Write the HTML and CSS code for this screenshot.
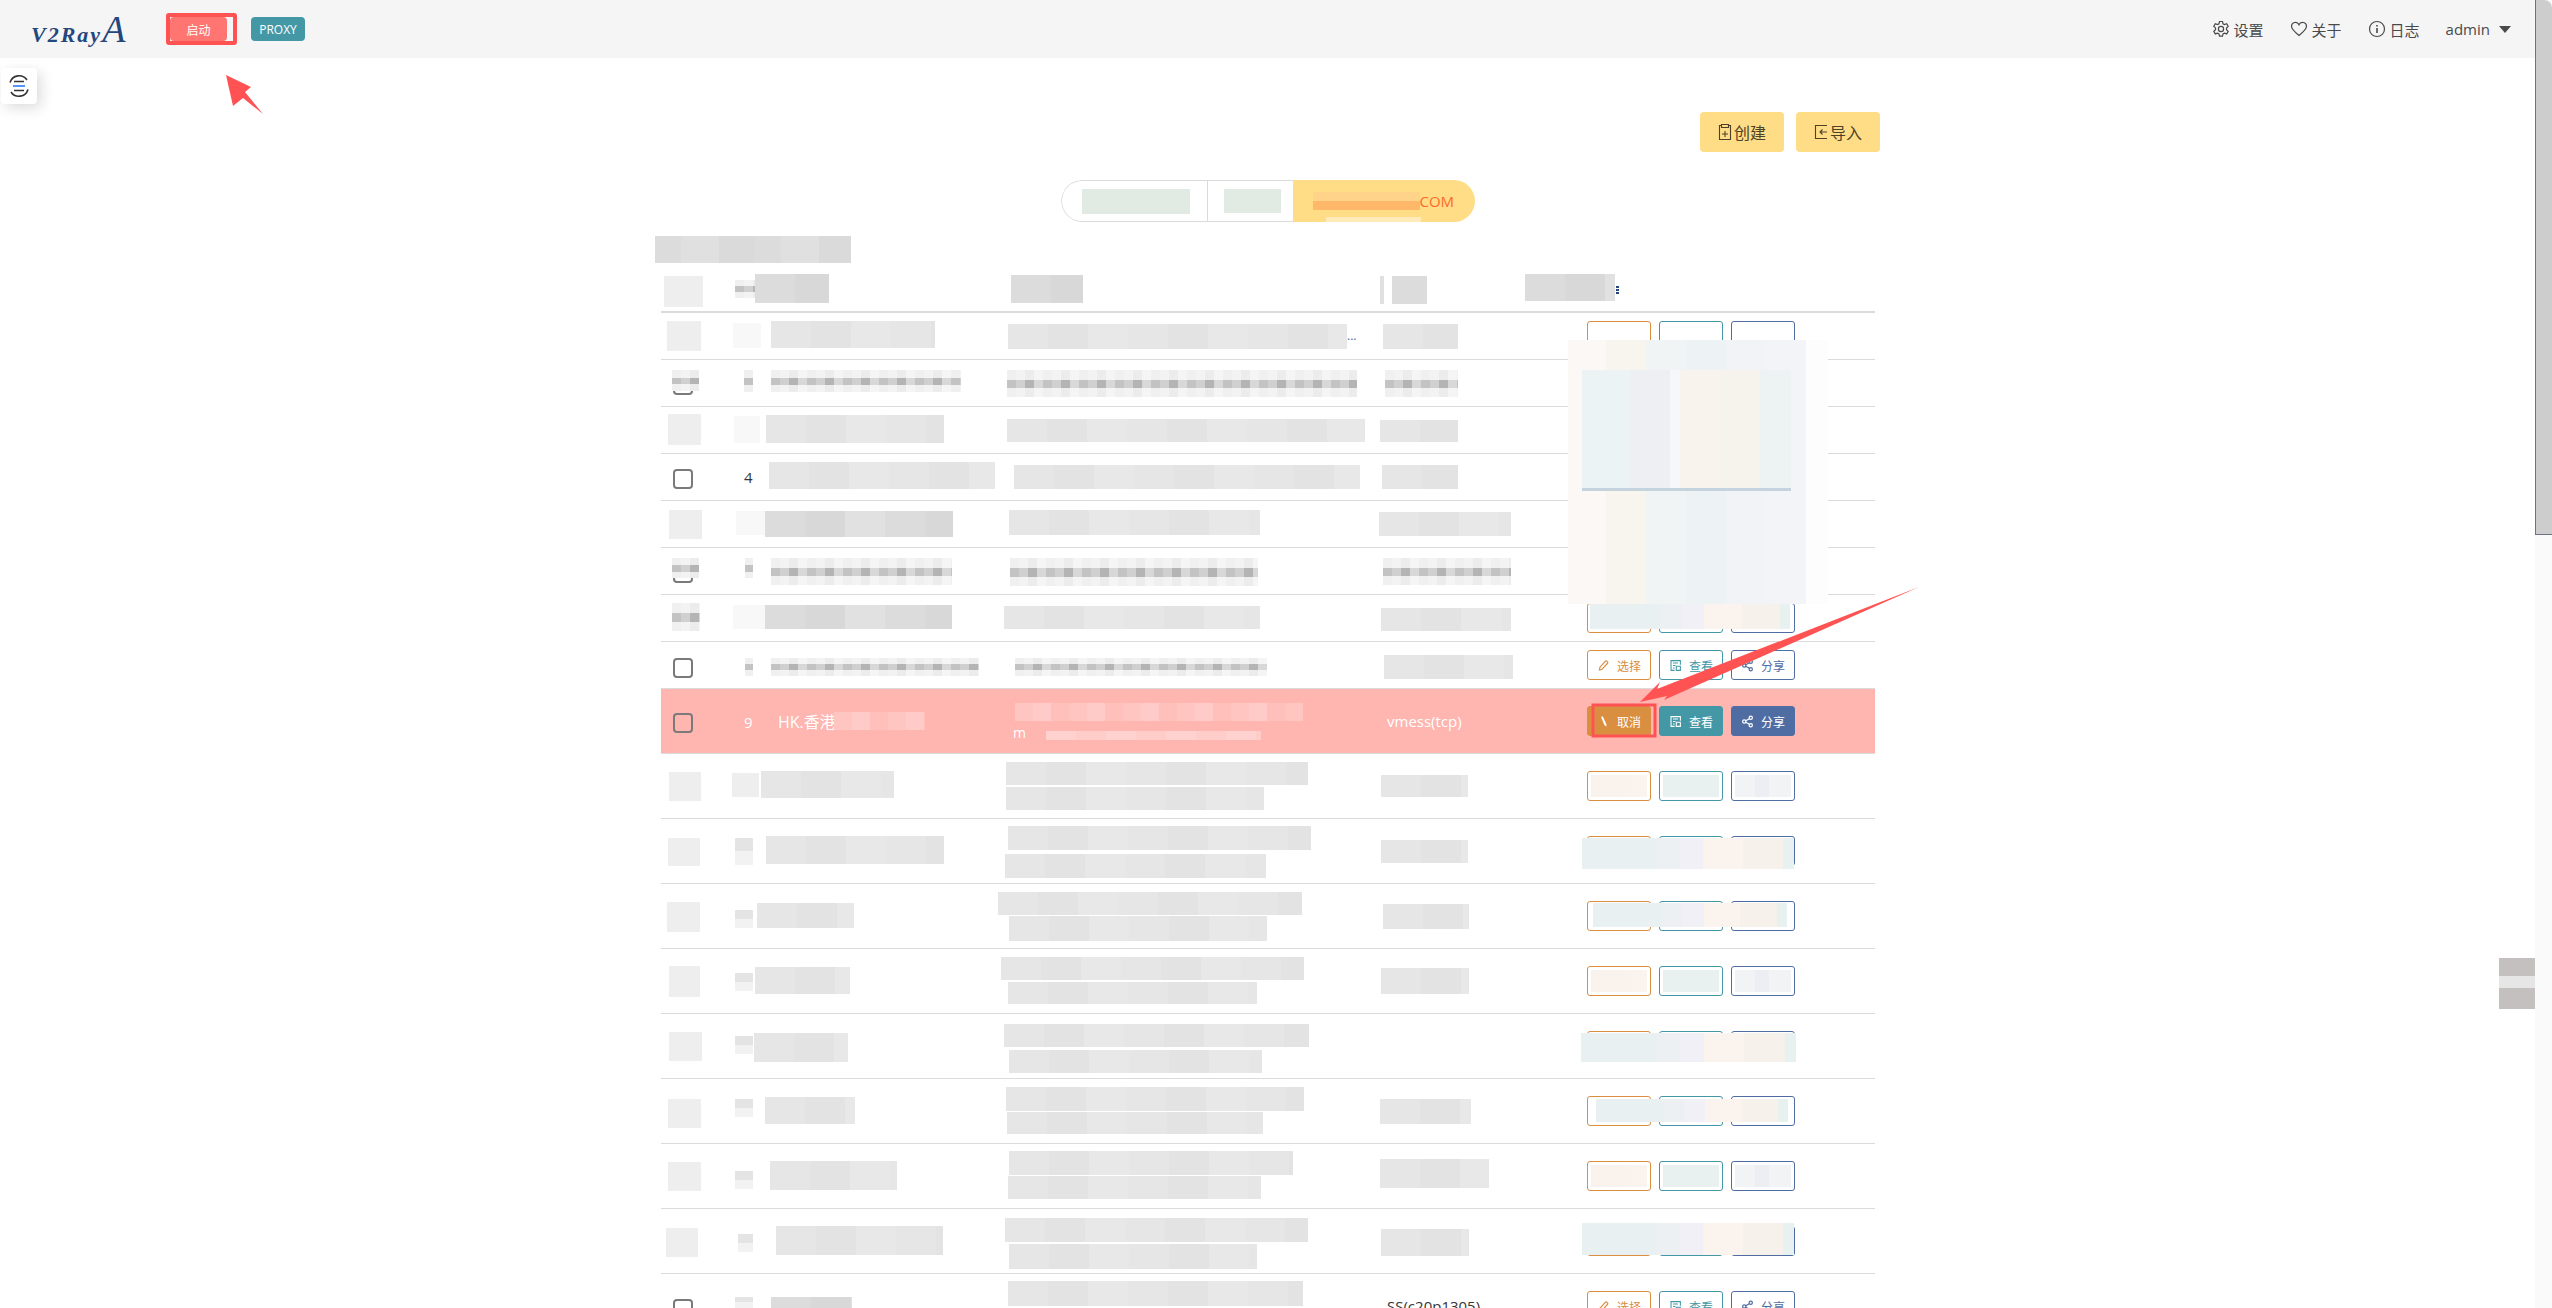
FILE: index.html
```html
<!DOCTYPE html>
<html lang="en">

<head>
    <meta charset="UTF-8">
    <title>V2RayA</title>
    <link rel="stylesheet" href="styles.css">
</head>

<body>
    <svg class="defs" width="0" height="0">
        <symbol id="i-pencil" viewBox="0 0 16 16">
            <path d="M3 13.5l.6-3.4 6.6-7.2a1.5 1.5 0 0 1 2.2 0l.4.4a1.5 1.5 0 0 1 0 2.2L6.200 12.700z" fill="none" stroke="currentColor" stroke-width="1.500" />
        </symbol>
        <symbol id="i-pencil-on" viewBox="0 0 16 16">
            <path d="M5 2.500l2-1 4.500 9.500.2 3.500-2.700-2.300z" fill="currentColor" />
        </symbol>
        <symbol id="i-view" viewBox="0 0 16 16">
            <path d="M14 7V2H2.500v12H7M5 5h6M5 8h3M5 11h2" fill="none" stroke="currentColor" stroke-width="1.300" />
            <path d="M9 9h5v5H9z" fill="none" stroke="currentColor" stroke-width="1.300" />
        </symbol>
        <symbol id="i-share" viewBox="0 0 16 16">
            <circle cx="12" cy="3.500" r="2" fill="none" stroke="currentColor" stroke-width="1.500" />
            <circle cx="4" cy="8" r="2" fill="none" stroke="currentColor" stroke-width="1.500" />
            <circle cx="12" cy="12.500" r="2" fill="none" stroke="currentColor" stroke-width="1.500" />
            <path d="M5.800 7l4.400-2.500M5.800 9l4.400 2.500" stroke="currentColor" stroke-width="1.500" />
        </symbol>
    </svg>

    <div class="page">
        <div class="content">
            <nav class="navbar">
                <div class="logo">V2Ray<span class="logo-a">A</span></div>
                <a class="tag tag-start">启动</a>
                <a class="tag tag-proxy">PROXY</a>
                <div class="nav-right">
                    <a class="nav-item">
                        <svg class="nav-ico" viewBox="0 0 18 18">
                            <path d="M7.500 1.500h3l.5 2.300 1.500.8 2.200-.8 1.500 2.600-1.700 1.600v1.700l1.700 1.600-1.500 2.600-2.200-.8-1.500.8-.5 2.300h-3l-.5-2.300-1.500-.8-2.200.8-1.500-2.600 1.700-1.600V7.900L1.800 6.400l1.500-2.600 2.200.8 1.500-.8z" fill="none" stroke="currentColor" stroke-width="1.200" />
                            <circle cx="9" cy="9" r="2.600" fill="none" stroke="currentColor" stroke-width="1.200" />
                        </svg>设置
                    </a>
                    <a class="nav-item">
                        <svg class="nav-ico" viewBox="0 0 18 18">
                            <path d="M9 15.500C4 11.500 1.500 9.200 1.500 6.300A3.900 3.900 0 0 1 9 4.800a3.900 3.900 0 0 1 7.500 1.500c0 2.900-2.500 5.200-7.500 9.200z" fill="none" stroke="currentColor" stroke-width="1.200" />
                        </svg>关于
                    </a>
                    <a class="nav-item">
                        <svg class="nav-ico" viewBox="0 0 18 18">
                            <circle cx="9" cy="9" r="7.500" fill="none" stroke="currentColor" stroke-width="1.200" />
                            <path d="M9 8v5M9 5v1.500" stroke="currentColor" stroke-width="1.600" />
                        </svg>日志
                    </a>
                    <a class="nav-item nav-user">admin<span class="caret"></span></a>
                </div>
            </nav>

            <main class="container">
                <div class="toolbar">
                    <a class="btn-add">
                        <svg class="add-ico" viewBox="0 0 14 18">
                            <path d="M3.500 2.500H1.500v14h11v-14h-2M3.500 1.500h7v3h-7zM7 8v6M4 11h6" fill="none" stroke="currentColor" stroke-width="1.100" />
                        </svg>创建
                    </a>
                    <a class="btn-add">
                        <svg class="add-ico" viewBox="0 0 14 18">
                            <path d="M13 2.500H1.500v13H13M13 9H6M8.500 6.500L6 9l2.500 2.500" fill="none" stroke="currentColor" stroke-width="1.100" />
                        </svg>导入
                    </a>
                </div>

                <div class="tabs">
                    <div class="tab tab-one"><span class="tab-mask one"></span></div>
                    <div class="tab tab-two"><span class="tab-mask two"></span></div>
                    <div class="tab tab-on">
                        <span class="tab-mask three"></span>COM
                        <span class="tab-smudge"></span>
                    </div>
                </div>

                <div class="mask title-mask"></div>

                <div class="table">
                    <div class="row head">
                        <div class="cell"><span class="mask pale m-c"></span></div>
                        <div class="cell"><span class="mask mosaic m-n"></span></div>
                        <div class="cell"><span class="mask dark m-name"></span></div>
                        <div class="cell"><span class="mask dark m-addr"></span></div>
                        <div class="cell"><span class="proto-bar"></span><span class="mask dark m-proto"></span></div>
                        <div class="cell"><span class="mask dark m-ops"></span><span class="sort-dots"></span></div>
                    </div>

                    <div class="row r1">
                        <div class="cell"><span class="mask pale m-c"></span></div>
                        <div class="cell"><span class="mask faint m-n"></span></div>
                        <div class="cell"><span class="mask m-name"></span></div>
                        <div class="cell"><span class="mask m-addr"></span><span class="more">...</span></div>
                        <div class="cell"><span class="mask m-proto"></span></div>
                        <div class="cell ops">
                            <a class="btn warn"></a>
                            <a class="btn info"></a>
                            <a class="btn link"></a>
                        </div>
                    </div>

                    <div class="row r2">
                        <div class="cell"><input class="check" type="checkbox"><span class="mask mosaic m-c over"></span></div>
                        <div class="cell"><span class="mask mosaic m-n"></span></div>
                        <div class="cell"><span class="mask mosaic m-name"></span></div>
                        <div class="cell"><span class="mask mosaic m-addr"></span></div>
                        <div class="cell"><span class="mask mosaic m-proto"></span></div>
                        <div class="cell ops"><a class="btn warn"></a><a class="btn info"></a><a class="btn link"></a></div>
                    </div>

                    <div class="row r3">
                        <div class="cell"><span class="mask pale m-c"></span></div>
                        <div class="cell"><span class="mask faint m-n"></span></div>
                        <div class="cell"><span class="mask m-name"></span></div>
                        <div class="cell"><span class="mask m-addr"></span></div>
                        <div class="cell"><span class="mask m-proto"></span></div>
                        <div class="cell ops"><a class="btn warn"></a><a class="btn info"></a><a class="btn link"></a></div>
                    </div>

                    <div class="row r4">
                        <div class="cell"><input class="check" type="checkbox"></div>
                        <div class="cell"><span class="no">4</span></div>
                        <div class="cell"><span class="mask m-name"></span></div>
                        <div class="cell"><span class="mask m-addr"></span></div>
                        <div class="cell"><span class="mask m-proto"></span></div>
                        <div class="cell ops"><a class="btn warn"></a><a class="btn info"></a><a class="btn link"></a></div>
                    </div>

                    <div class="row r5">
                        <div class="cell"><span class="mask pale m-c"></span></div>
                        <div class="cell"><span class="mask faint m-n"></span></div>
                        <div class="cell"><span class="mask dark m-name"></span></div>
                        <div class="cell"><span class="mask m-addr"></span></div>
                        <div class="cell"><span class="mask m-proto"></span></div>
                        <div class="cell ops"><a class="btn warn"></a><a class="btn info"></a><a class="btn link"></a></div>
                    </div>

                    <div class="row r6">
                        <div class="cell"><input class="check" type="checkbox"><span class="mask mosaic m-c over"></span></div>
                        <div class="cell"><span class="mask mosaic m-n"></span></div>
                        <div class="cell"><span class="mask mosaic m-name"></span></div>
                        <div class="cell"><span class="mask mosaic m-addr"></span></div>
                        <div class="cell"><span class="mask mosaic m-proto"></span></div>
                        <div class="cell ops"><a class="btn warn"></a><a class="btn info"></a><a class="btn link"></a></div>
                    </div>

                    <div class="row r7">
                        <div class="cell"><span class="mask mosaic m-c"></span></div>
                        <div class="cell"><span class="mask faint m-n"></span></div>
                        <div class="cell"><span class="mask dark m-name"></span></div>
                        <div class="cell"><span class="mask m-addr"></span></div>
                        <div class="cell"><span class="mask m-proto"></span></div>
                        <div class="cell ops">
                            <a class="btn warn"></a><a class="btn info"></a><a class="btn link"></a>
                            <span class="cover"></span>
                        </div>
                    </div>

                    <div class="row r8">
                        <div class="cell"><input class="check" type="checkbox"></div>
                        <div class="cell"><span class="mask mosaic m-n"></span></div>
                        <div class="cell"><span class="mask mosaic m-name"></span></div>
                        <div class="cell"><span class="mask mosaic m-addr"></span></div>
                        <div class="cell"><span class="mask m-proto"></span></div>
                        <div class="cell ops">
                            <a class="btn warn"><svg class="ico"><use href="#i-pencil" /></svg>选择</a>
                            <a class="btn info"><svg class="ico"><use href="#i-view" /></svg>查看</a>
                            <a class="btn link"><svg class="ico"><use href="#i-share" /></svg>分享</a>
                        </div>
                    </div>

                    <div class="row tall r9 selected">
                        <div class="cell"><input class="check" type="checkbox"></div>
                        <div class="cell"><span class="no">9</span></div>
                        <div class="cell name-cell"><span class="name-text">HK.香港.A</span><span class="mask rose m-name"></span></div>
                        <div class="cell">
                            <span class="mask rose m-addr"></span>
                            <div class="addr-line"><span class="addr-text">m</span><span class="mask rose light m-addr2"></span></div>
                        </div>
                        <div class="cell"><span class="proto-text">vmess(tcp)</span></div>
                        <div class="cell ops">
                            <a class="btn warn on"><svg class="ico"><use href="#i-pencil-on" /></svg>取消</a>
                            <a class="btn info on"><svg class="ico"><use href="#i-view" /></svg>查看</a>
                            <a class="btn link on"><svg class="ico"><use href="#i-share" /></svg>分享</a>
                        </div>
                    </div>

                    <div class="row tall r10">
                        <div class="cell"><span class="mask pale m-c"></span></div>
                        <div class="cell"><span class="mask pale m-n"></span></div>
                        <div class="cell"><span class="mask m-name"></span></div>
                        <div class="cell"><span class="mask m-addr"></span><span class="mask m-addr2"></span></div>
                        <div class="cell"><span class="mask m-proto"></span></div>
                        <div class="cell ops">
                            <a class="btn warn"><span class="fill"></span></a>
                            <a class="btn info"><span class="fill"></span></a>
                            <a class="btn link"><span class="fill"></span></a>
                        </div>
                    </div>

                    <div class="row tall r11">
                        <div class="cell"><span class="mask pale m-c"></span></div>
                        <div class="cell"><span class="mask bands m-n"></span></div>
                        <div class="cell"><span class="mask m-name"></span></div>
                        <div class="cell"><span class="mask m-addr"></span><span class="mask m-addr2"></span></div>
                        <div class="cell"><span class="mask m-proto"></span></div>
                        <div class="cell ops">
                            <a class="btn warn"></a><a class="btn info"></a><a class="btn link"></a>
                            <span class="cover"></span>
                        </div>
                    </div>

                    <div class="row tall r12">
                        <div class="cell"><span class="mask pale m-c"></span></div>
                        <div class="cell"><span class="mask bands m-n"></span></div>
                        <div class="cell"><span class="mask m-name"></span></div>
                        <div class="cell"><span class="mask m-addr"></span><span class="mask m-addr2"></span></div>
                        <div class="cell"><span class="mask m-proto"></span></div>
                        <div class="cell ops">
                            <a class="btn warn"></a><a class="btn info"></a><a class="btn link"></a>
                            <span class="cover"></span>
                        </div>
                    </div>

                    <div class="row tall r13">
                        <div class="cell"><span class="mask pale m-c"></span></div>
                        <div class="cell"><span class="mask bands m-n"></span></div>
                        <div class="cell"><span class="mask m-name"></span></div>
                        <div class="cell"><span class="mask m-addr"></span><span class="mask m-addr2"></span></div>
                        <div class="cell"><span class="mask m-proto"></span></div>
                        <div class="cell ops">
                            <a class="btn warn"><span class="fill"></span></a>
                            <a class="btn info"><span class="fill"></span></a>
                            <a class="btn link"><span class="fill"></span></a>
                        </div>
                    </div>

                    <div class="row tall r14">
                        <div class="cell"><span class="mask pale m-c"></span></div>
                        <div class="cell"><span class="mask bands m-n"></span></div>
                        <div class="cell"><span class="mask m-name"></span></div>
                        <div class="cell"><span class="mask m-addr"></span><span class="mask m-addr2"></span></div>
                        <div class="cell"></div>
                        <div class="cell ops">
                            <a class="btn warn"></a><a class="btn info"></a><a class="btn link"></a>
                            <span class="cover"></span>
                        </div>
                    </div>

                    <div class="row tall r15">
                        <div class="cell"><span class="mask pale m-c"></span></div>
                        <div class="cell"><span class="mask bands m-n"></span></div>
                        <div class="cell"><span class="mask m-name"></span></div>
                        <div class="cell"><span class="mask m-addr"></span><span class="mask m-addr2"></span></div>
                        <div class="cell"><span class="mask m-proto"></span></div>
                        <div class="cell ops">
                            <a class="btn warn"></a><a class="btn info"></a><a class="btn link"></a>
                            <span class="cover"></span>
                        </div>
                    </div>

                    <div class="row tall r16">
                        <div class="cell"><span class="mask pale m-c"></span></div>
                        <div class="cell"><span class="mask bands m-n"></span></div>
                        <div class="cell"><span class="mask m-name"></span></div>
                        <div class="cell"><span class="mask m-addr"></span><span class="mask m-addr2"></span></div>
                        <div class="cell"><span class="mask m-proto"></span></div>
                        <div class="cell ops">
                            <a class="btn warn"><span class="fill"></span></a>
                            <a class="btn info"><span class="fill"></span></a>
                            <a class="btn link"><span class="fill"></span></a>
                        </div>
                    </div>

                    <div class="row tall r17">
                        <div class="cell"><span class="mask pale m-c"></span></div>
                        <div class="cell"><span class="mask bands m-n"></span></div>
                        <div class="cell"><span class="mask m-name"></span></div>
                        <div class="cell"><span class="mask m-addr"></span><span class="mask m-addr2"></span></div>
                        <div class="cell"><span class="mask m-proto"></span></div>
                        <div class="cell ops">
                            <a class="btn warn"></a><a class="btn info"></a><a class="btn link"></a>
                            <span class="cover"></span>
                        </div>
                    </div>

                    <div class="row tall r18">
                        <div class="cell"><input class="check" type="checkbox"></div>
                        <div class="cell"><span class="mask bands m-n"></span></div>
                        <div class="cell"><span class="mask dark m-name"></span></div>
                        <div class="cell"><span class="mask m-addr"></span></div>
                        <div class="cell"><span class="proto-text">SS(c20p1305)</span></div>
                        <div class="cell ops">
                            <a class="btn warn"><svg class="ico"><use href="#i-pencil" /></svg>选择</a>
                            <a class="btn info"><svg class="ico"><use href="#i-view" /></svg>查看</a>
                            <a class="btn link"><svg class="ico"><use href="#i-share" /></svg>分享</a>
                        </div>
                    </div>
                </div>
            </main>

            <!-- things lying over the page -->
            <a class="side-toggle">
                <svg width="24" height="24" viewBox="0 0 24 24">
                    <path d="M3 8.500A9.500 9.500 0 0 1 20 6M21 15.500A9.500 9.500 0 0 1 4 18" fill="none" stroke="#333" stroke-width="1.600" />
                    <path d="M7 7.500h10M7 16.500h10" stroke="#333" stroke-width="1.400" />
                    <path d="M6 12h12" stroke="#3f8cff" stroke-width="1.800" />
                </svg>
            </a>

            <div class="big-mosaic"><div class="big-mosaic-inner"></div></div>

            <svg class="marks" width="2535" height="1308" viewBox="0 0 2535 1308">
                <path d="M226 75l25 12-6 5 18 22-20-16-10 8z" fill="#ff5353" />
                <path d="M1640 702l20-20-3 7 262-102-255 113 3-4z" fill="#ff5353" />
                <rect x="1593" y="705" width="62" height="31" fill="none" stroke="#ff5353" stroke-width="3" />
                <rect x="168" y="15" width="67" height="28" fill="none" stroke="#ff5353" stroke-width="4" rx="1" />
            </svg>

            <div class="edge-patch"></div>
        </div>

        <div class="scrollbar"><div class="thumb"></div></div>
    </div>
</body>

</html>
```
FILE: styles.css
```css
* {
    margin: 0;
    padding: 0;
    box-sizing: border-box;
}

html,
body {
    height: 1308px;
    overflow: hidden;
}

body {
    font-family: "Open Sans", "Noto Sans CJK SC", sans-serif;
    color: #363636;
    background-color: #fff;
    font-size: 16px;
}

a {
    color: inherit;
    text-decoration: none;
}

.defs {
    position: absolute;
}

.page {
    display: flex;
    height: 1308px;
}

.content {
    position: relative;
    width: 2535px;
    overflow: hidden;
}

/* navbar */
.navbar {
    display: flex;
    align-items: center;
    height: 58px;
    background-color: #f5f5f5;
    padding-left: 31px;
}

.logo {
    width: 139px;
    color: #24477c;
    font-family: "Liberation Serif", serif;
    font-style: italic;
    font-weight: bold;
    font-size: 22px;
    letter-spacing: 2px;
}

.logo-a {
    font-size: 38px;
    font-weight: normal;
    letter-spacing: 0;
}

.tag {
    display: flex;
    align-items: center;
    justify-content: center;
    height: 24px;
    border-radius: 4px;
    color: #fff;
    font-size: 12px;
}

.tag-start {
    width: 57px;
    background-color: #ff7571;
    font-family: "Noto Sans CJK SC", sans-serif;
}

.tag-proxy {
    width: 54px;
    margin-left: 24px;
    background-color: #4498a6;
}

.nav-right {
    display: flex;
    align-items: center;
    margin-left: auto;
    padding-right: 24px;
    color: #4a4a4a;
    font-size: 15px;
}

.nav-item {
    display: flex;
    align-items: center;
    gap: 4px;
    margin-left: 26px;
}

.nav-ico {
    width: 18px;
    height: 18px;
}

.caret {
    width: 0;
    height: 0;
    margin-left: 5px;
    border-left: 6px solid transparent;
    border-right: 6px solid transparent;
    border-top: 7px solid #4a4a4a;
}

.side-toggle {
    position: absolute;
    left: 1px;
    top: 68px;
    display: flex;
    align-items: center;
    justify-content: center;
    width: 36px;
    height: 36px;
    border-radius: 4px;
    background-color: #fff;
    box-shadow: 4px 4px 14px rgba(0, 0, 0, 0.14);
}

/* top of the content */
.container {
    width: 1225px;
    margin: 0 auto;
}

.toolbar {
    display: flex;
    justify-content: flex-end;
    gap: 12px;
    padding-top: 54px;
}

.btn-add {
    display: flex;
    align-items: center;
    justify-content: center;
    gap: 2px;
    width: 84px;
    height: 40px;
    border-radius: 4px;
    background-color: #ffdd87;
    color: #4d4226;
    font-size: 16px;
    font-family: "Noto Sans CJK SC", sans-serif;
}

.add-ico {
    width: 14px;
    height: 18px;
}

.tabs {
    display: flex;
    width: 414px;
    height: 42px;
    margin: 28px auto 0;
    border-radius: 21px;
    overflow: hidden;
}

.tab {
    display: flex;
    align-items: center;
    border: 1px solid #dbdbdb;
}

.tab-one {
    width: 146px;
    padding-left: 20px;
    border-right: 0;
    border-radius: 21px 0 0 21px;
}

.tab-two {
    width: 86px;
    padding-left: 16px;
    border-right: 0;
}

.tab-on {
    position: relative;
    flex: 1;
    padding-left: 20px;
    border: 0;
    background-color: #ffdd87;
    color: #ff6a2a;
    font-size: 15px;
}

.tab-mask {
    display: block;
    background-color: #e1ebe3;
}

.one {
    width: 108px;
    height: 25px;
}

.two {
    width: 57px;
    height: 24px;
}

.three {
    width: 107px;
    height: 18px;
    background: linear-gradient(180deg, #ffd48a 0 50%, #ffb76a 50%);
}

.tab-smudge {
    position: absolute;
    left: 33px;
    bottom: 0;
    width: 95px;
    height: 5px;
    background-color: #ffebba;
}

/* blurred out parts */
.mask {
    display: block;
    flex: none;
    background: repeating-linear-gradient(90deg, #e6e6e6 0 40px, #e3e3e3 40px 80px, #e8e8e8 80px 120px);
}

.dark {
    background: repeating-linear-gradient(90deg, #dcdcdc 0 40px, #d8d8d8 40px 80px, #e1e1e1 80px 120px);
}

.pale {
    background: #eeeeee;
}

.faint {
    background: #f8f8f8;
}

.bands {
    background: linear-gradient(180deg, #e4e4e4 0 50%, #f2f2f2 50%);
}

.mosaic {
    background:
        linear-gradient(180deg, rgba(255, 255, 255, 0.75) 0 36%, transparent 36% 68%, rgba(255, 255, 255, 0.75) 68%),
        repeating-linear-gradient(90deg, #c3c3c3 0 9px, #d0d0d0 9px 18px, #b4b4b4 18px 27px, #d8d8d8 27px 36px);
}

.rose {
    background: repeating-linear-gradient(90deg, #ffc5c1 0 18px, #ffcbc8 18px 36px, #ffc0bc 36px 54px);
}

.rose.light {
    background: repeating-linear-gradient(90deg, #ffd2cf 0 30px, #ffcdc9 30px 60px);
}

.title-mask {
    width: 196px;
    height: 27px;
    margin-top: 14px;
    background: repeating-linear-gradient(90deg, #dcdcdc 0 26px, #e0e0e0 26px 64px, #dadada 64px 100px);
}

/* table */
.table {
    width: 1214px;
    margin-left: 6px;
}

.row {
    display: grid;
    grid-template-columns: 62px 31px 244px 380px 209px 1fr;
    height: 47px;
    border-bottom: 1px solid #dbdbdb;
}

.tall {
    height: 65px;
}

.head {
    height: 50px;
    border-bottom-width: 2px;
}

.cell {
    position: relative;
    display: flex;
    flex-direction: column;
    align-items: flex-start;
    min-width: 0;
}

.check {
    appearance: none;
    display: block;
    width: 20px;
    height: 20px;
    margin: 15px 0 0 12px;
    border: 2px solid #7a7a7a;
    border-radius: 4px;
    background-color: transparent;
}

.tall .check {
    margin-top: 24px;
}

.no {
    margin: 11px 0 0 21px;
    line-height: 24px;
    font-size: 15px;
}

.tall .no {
    margin-top: 21px;
}

.over {
    position: absolute;
    left: 0;
    top: 0;
}

.more {
    position: absolute;
    left: 349px;
    top: 15px;
    font-size: 12px;
    line-height: 16px;
    color: #3d6f9e;
}

.proto-bar {
    position: absolute;
    left: 2px;
    top: 13px;
    width: 4px;
    height: 28px;
    background-color: #e0e0e0;
}

.sort-dots {
    position: absolute;
    left: 29px;
    top: 23px;
    width: 3px;
    height: 8px;
    background: repeating-linear-gradient(180deg, #24477c 0 2px, transparent 2px 3px);
}

.selected {
    background-color: #ffb5b0;
    color: #fff;
}

.name-cell {
    flex-direction: row;
    align-items: flex-start;
}

.name-text {
    margin: 21px 0 0 24px;
    line-height: 24px;
    white-space: nowrap;
    width: 56px;
}

.addr-line {
    display: flex;
    align-items: center;
}

.addr-text {
    margin: 5px 0 0 15px;
    font-size: 14px;
    line-height: 14px;
}

.proto-text {
    margin: 20px 0 0 9px;
    line-height: 24px;
    white-space: nowrap;
    font-size: 15px;
}

.r18 .proto-text {
    margin-top: 20px;
    color: #363636;
}

/* the operation buttons */
.ops {
    flex-direction: row;
    gap: 8px;
    padding-top: 8px;
}

.tall .ops {
    padding-top: 17px;
}

.btn {
    position: relative;
    display: flex;
    align-items: center;
    justify-content: center;
    gap: 7px;
    width: 64px;
    height: 30px;
    border: 1px solid;
    border-radius: 3px;
    background-color: #fff;
    font-size: 12px;
    font-family: "Noto Sans CJK SC", sans-serif;
}

.warn {
    border-color: #d98e40;
    color: #d98e40;
}

.info {
    border-color: #4498a6;
    color: #4498a6;
}

.link {
    border-color: #4f6da3;
    color: #4f6da3;
}

.btn.on {
    color: #fff;
}

.warn.on {
    background-color: #d98e40;
}

.info.on {
    background-color: #4498a6;
}

.link.on {
    background-color: #4f6da3;
}

.ico {
    width: 13px;
    height: 13px;
}

.fill {
    position: absolute;
    inset: 3px;
}

.warn .fill {
    background: linear-gradient(90deg, #f9f2ec, #faf3ee);
}

.info .fill {
    background: #e8f1f0;
}

.link .fill {
    background: linear-gradient(90deg, #f2f3f5 0 35%, #eceef4 35% 60%, #f2f3f5 60%);
}

.cover {
    position: absolute;
    background: linear-gradient(90deg, #e8f0f2 0 35%, #ecf0f3 35% 46%, #f0f0f6 46% 57%, #fbf4ee 57% 76%, #f6f1ea 76% 95%, #e7f2f0 95%);
}

/* big patch over the first rows */
.big-mosaic {
    position: absolute;
    left: 1568px;
    top: 340px;
    width: 260px;
    height: 264px;
    padding: 30px 0 0 14px;
    background: linear-gradient(90deg, #fcf8f5 0 38px, #f8f4ee 38px 78px, #f0f4f5 78px 118px, #edf3f4 118px 158px, #f1f3f6 158px 198px, #f3f4f8 198px 238px, #fdfdfd 238px);
}

.big-mosaic-inner {
    width: 209px;
    height: 121px;
    border-bottom: 3px solid #c5d3de;
    background: linear-gradient(90deg, #ecf3f4 0 48px, #eeeff3 48px 88px, #f6f7f9 88px 98px, #f9f3ee 98px 138px, #f6f2ec 138px 178px, #ecf3f2 178px);
}

/* the red marks */
.marks {
    position: absolute;
    left: 0;
    top: 0;
    pointer-events: none;
}

.edge-patch {
    position: absolute;
    left: 2499px;
    top: 958px;
    width: 36px;
    height: 51px;
    background: linear-gradient(180deg, #c5c0c0 0 18px, #e6e6e6 18px 30px, #c5c0c0 30px);
}

/* scrollbar */
.scrollbar {
    flex: 1;
    background-color: #fafafa;
}

.thumb {
    height: 535px;
    background-color: #cdcdcd;
    border-left: 1px solid #6b7280;
    border-bottom: 1px solid #6b7280;
    border-top-right-radius: 8px;
}

/* every blurred box: margin is its offset inside the cell */
.head .m-c { margin: 13px 0 0 3px; width: 39px; height: 31px; }
.head .m-n { margin: 17px 0 0 12px; width: 25px; height: 18px; }
.head .m-name { margin: 11px 0 0 1px; width: 74px; height: 29px; }
.head .m-addr { margin: 12px 0 0 13px; width: 72px; height: 28px; }
.head .m-proto { margin: 13px 0 0 14px; width: 35px; height: 28px; }
.head .m-ops { margin: 11px 0 0 -62px; width: 90px; height: 27px; }

.r1 .m-c { margin: 8px 0 0 6px; width: 34px; height: 30px; }
.r1 .m-n { margin: 10px 0 0 10px; width: 28px; height: 25px; }
.r1 .m-name { margin: 8px 0 0 17px; width: 164px; height: 27px; }
.r1 .m-addr { margin: 11px 0 0 10px; width: 339px; height: 25px; }
.r1 .m-proto { margin: 11px 0 0 5px; width: 75px; height: 25px; }

.r2 .m-c { margin: 10px 0 0 11px; width: 27px; height: 21px; }
.r2 .m-n { margin: 10px 0 0 21px; width: 9px; height: 22px; }
.r2 .m-name { margin: 10px 0 0 17px; width: 190px; height: 22px; }
.r2 .m-addr { margin: 10px 0 0 9px; width: 350px; height: 27px; }
.r2 .m-proto { margin: 10px 0 0 7px; width: 73px; height: 27px; }

.r3 .m-c { margin: 7px 0 0 7px; width: 33px; height: 31px; }
.r3 .m-n { margin: 9px 0 0 11px; width: 26px; height: 27px; }
.r3 .m-name { margin: 8px 0 0 12px; width: 178px; height: 28px; }
.r3 .m-addr { margin: 12px 0 0 9px; width: 358px; height: 23px; }
.r3 .m-proto { margin: 13px 0 0 2px; width: 78px; height: 22px; }

.r4 .m-name { margin: 8px 0 0 15px; width: 226px; height: 27px; }
.r4 .m-addr { margin: 11px 0 0 16px; width: 346px; height: 24px; }
.r4 .m-proto { margin: 11px 0 0 4px; width: 76px; height: 24px; }

.r5 .m-c { margin: 9px 0 0 8px; width: 33px; height: 29px; }
.r5 .m-n { margin: 10px 0 0 13px; width: 29px; height: 24px; }
.r5 .m-name { margin: 10px 0 0 11px; width: 188px; height: 26px; }
.r5 .m-addr { margin: 9px 0 0 11px; width: 251px; height: 25px; }
.r5 .m-proto { margin: 11px 0 0 1px; width: 132px; height: 24px; }

.r6 .m-c { margin: 10px 0 0 11px; width: 27px; height: 20px; }
.r6 .m-n { margin: 10px 0 0 22px; width: 8px; height: 20px; }
.r6 .m-name { margin: 10px 0 0 17px; width: 181px; height: 27px; }
.r6 .m-addr { margin: 10px 0 0 12px; width: 248px; height: 28px; }
.r6 .m-proto { margin: 10px 0 0 5px; width: 128px; height: 27px; }

.r7 .m-c { margin: 8px 0 0 11px; width: 28px; height: 28px; }
.r7 .m-n { margin: 10px 0 0 10px; width: 32px; height: 24px; }
.r7 .m-name { margin: 10px 0 0 11px; width: 187px; height: 24px; }
.r7 .m-addr { margin: 11px 0 0 6px; width: 256px; height: 23px; }
.r7 .m-proto { margin: 13px 0 0 3px; width: 130px; height: 23px; }
.r7 .cover { left: 3px; top: 0; width: 200px; height: 34px; }

.r8 .check { margin-top: 16px; }
.r8 .m-n { margin: 16px 0 0 22px; width: 8px; height: 18px; }
.r8 .m-name { margin: 16px 0 0 17px; width: 208px; height: 18px; }
.r8 .m-addr { margin: 16px 0 0 17px; width: 252px; height: 18px; }
.r8 .m-proto { margin: 13px 0 0 6px; width: 129px; height: 24px; }

.r9 .m-name { margin: 23px 0 0 0; width: 91px; height: 18px; }
.r9 .m-addr { margin: 14px 0 0 17px; width: 288px; height: 18px; }
.r9 .m-addr2 { margin: 9px 0 0 20px; width: 215px; height: 9px; }

.r10 .m-c { margin: 18px 0 0 8px; width: 32px; height: 29px; }
.r10 .m-n { margin: 19px 0 0 9px; width: 27px; height: 24px; }
.r10 .m-name { margin: 17px 0 0 7px; width: 133px; height: 27px; }
.r10 .m-addr { margin: 8px 0 0 8px; width: 302px; height: 23px; }
.r10 .m-addr2 { margin: 2px 0 0 8px; width: 258px; height: 23px; }
.r10 .m-proto { margin: 21px 0 0 3px; width: 87px; height: 22px; }

.r11 .m-c { margin: 19px 0 0 7px; width: 32px; height: 28px; }
.r11 .m-n { margin: 19px 0 0 12px; width: 18px; height: 27px; }
.r11 .m-name { margin: 17px 0 0 12px; width: 178px; height: 28px; }
.r11 .m-addr { margin: 7px 0 0 10px; width: 303px; height: 24px; }
.r11 .m-addr2 { margin: 4px 0 0 7px; width: 261px; height: 24px; }
.r11 .m-proto { margin: 21px 0 0 3px; width: 87px; height: 23px; }
.r11 .cover { left: -5px; top: 19px; width: 212px; height: 31px; }

.r12 .m-c { margin: 18px 0 0 6px; width: 33px; height: 30px; }
.r12 .m-n { margin: 26px 0 0 12px; width: 18px; height: 18px; }
.r12 .m-name { margin: 19px 0 0 3px; width: 97px; height: 25px; }
.r12 .m-addr { margin: 8px 0 0 0; width: 304px; height: 23px; }
.r12 .m-addr2 { margin: 1px 0 0 11px; width: 258px; height: 25px; }
.r12 .m-proto { margin: 20px 0 0 5px; width: 86px; height: 25px; }
.r12 .cover { left: 6px; top: 19px; width: 194px; height: 24px; }

.r13 .m-c { margin: 17px 0 0 8px; width: 31px; height: 31px; }
.r13 .m-n { margin: 24px 0 0 12px; width: 18px; height: 18px; }
.r13 .m-name { margin: 18px 0 0 1px; width: 95px; height: 27px; }
.r13 .m-addr { margin: 8px 0 0 3px; width: 303px; height: 23px; }
.r13 .m-addr2 { margin: 2px 0 0 10px; width: 249px; height: 22px; }
.r13 .m-proto { margin: 19px 0 0 3px; width: 88px; height: 26px; }

.r14 .m-c { margin: 18px 0 0 8px; width: 33px; height: 29px; }
.r14 .m-n { margin: 22px 0 0 12px; width: 18px; height: 18px; }
.r14 .m-name { margin: 19px 0 0 0; width: 94px; height: 29px; }
.r14 .m-addr { margin: 10px 0 0 6px; width: 305px; height: 23px; }
.r14 .m-addr2 { margin: 3px 0 0 11px; width: 253px; height: 23px; }
.r14 .cover { left: -6px; top: 19px; width: 215px; height: 29px; }

.r15 .m-c { margin: 20px 0 0 7px; width: 33px; height: 29px; }
.r15 .m-n { margin: 20px 0 0 12px; width: 18px; height: 18px; }
.r15 .m-name { margin: 18px 0 0 11px; width: 90px; height: 27px; }
.r15 .m-addr { margin: 8px 0 0 8px; width: 298px; height: 24px; }
.r15 .m-addr2 { margin: 1px 0 0 9px; width: 256px; height: 22px; }
.r15 .m-proto { margin: 20px 0 0 2px; width: 91px; height: 25px; }
.r15 .cover { left: 9px; top: 20px; width: 192px; height: 23px; }

.r16 .m-c { margin: 18px 0 0 7px; width: 33px; height: 29px; }
.r16 .m-n { margin: 27px 0 0 12px; width: 18px; height: 18px; }
.r16 .m-name { margin: 17px 0 0 16px; width: 127px; height: 29px; }
.r16 .m-addr { margin: 7px 0 0 11px; width: 284px; height: 24px; }
.r16 .m-addr2 { margin: 1px 0 0 10px; width: 253px; height: 23px; }
.r16 .m-proto { margin: 15px 0 0 2px; width: 109px; height: 29px; }

.r17 .m-c { margin: 19px 0 0 5px; width: 32px; height: 29px; }
.r17 .m-n { margin: 25px 0 0 15px; width: 15px; height: 18px; }
.r17 .m-name { margin: 17px 0 0 22px; width: 167px; height: 29px; }
.r17 .m-addr { margin: 9px 0 0 7px; width: 303px; height: 24px; }
.r17 .m-addr2 { margin: 2px 0 0 11px; width: 248px; height: 25px; }
.r17 .m-proto { margin: 20px 0 0 3px; width: 88px; height: 27px; }
.r17 .cover { left: -5px; top: 14px; width: 212px; height: 32px; }

.r18 .check { margin-top: 25px; }
.r18 .m-n { margin: 23px 0 0 12px; width: 18px; height: 11px; }
.r18 .m-name { margin: 23px 0 0 17px; width: 81px; height: 11px; }
.r18 .m-addr { margin: 7px 0 0 10px; width: 295px; height: 25px; }
```
